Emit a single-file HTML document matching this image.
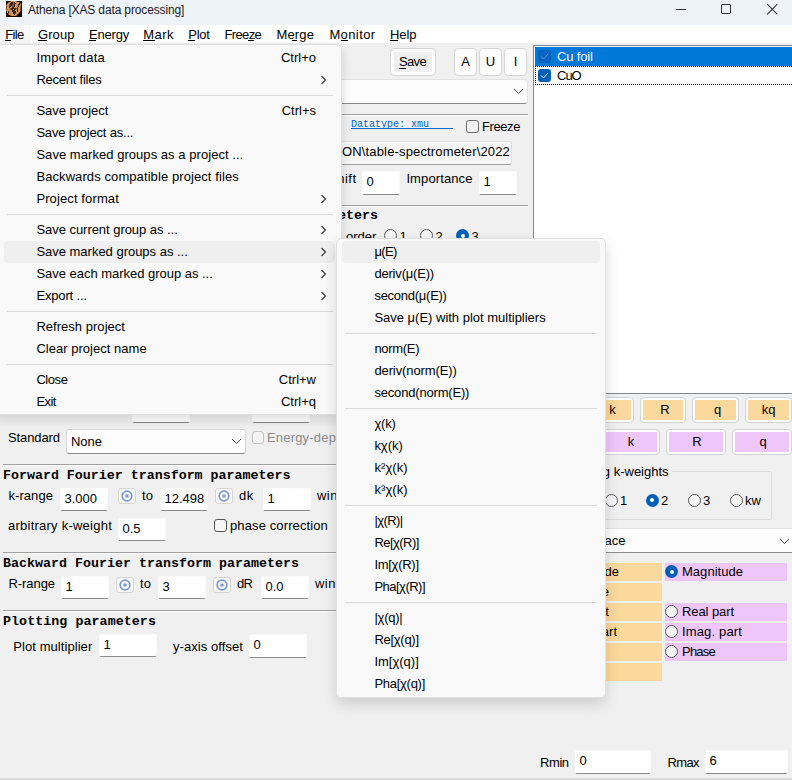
<!DOCTYPE html>
<html><head><meta charset="utf-8"><style>
html,body{margin:0;padding:0;}
body{width:792px;height:780px;overflow:hidden;position:relative;background:#f0f0f0;font-family:"Liberation Sans",sans-serif;}
body div{position:absolute;box-sizing:border-box;}
u{text-decoration:none;border-bottom:1px solid currentColor;}
</style></head><body>
<div style="left:0px;top:0px;width:792px;height:25px;background:#eef2f9;"></div>
<svg style="position:absolute;left:6px;top:1px" width="16" height="16" viewBox="0 0 16 16" shape-rendering="crispEdges"><rect x="0" y="0" width="1" height="1" fill="#0d0805"/><rect x="1" y="0" width="1" height="1" fill="#0d0805"/><rect x="2" y="0" width="1" height="1" fill="#0d0805"/><rect x="3" y="0" width="1" height="1" fill="#0d0805"/><rect x="4" y="0" width="1" height="1" fill="#7a5030"/><rect x="5" y="0" width="1" height="1" fill="#cf935c"/><rect x="6" y="0" width="1" height="1" fill="#cf935c"/><rect x="7" y="0" width="1" height="1" fill="#cf935c"/><rect x="8" y="0" width="1" height="1" fill="#cf935c"/><rect x="9" y="0" width="1" height="1" fill="#cf935c"/><rect x="10" y="0" width="1" height="1" fill="#7a5030"/><rect x="11" y="0" width="1" height="1" fill="#0d0805"/><rect x="12" y="0" width="1" height="1" fill="#0d0805"/><rect x="13" y="0" width="1" height="1" fill="#0d0805"/><rect x="14" y="0" width="1" height="1" fill="#0d0805"/><rect x="15" y="0" width="1" height="1" fill="#0d0805"/><rect x="0" y="1" width="1" height="1" fill="#0d0805"/><rect x="1" y="1" width="1" height="1" fill="#0d0805"/><rect x="2" y="1" width="1" height="1" fill="#7a5030"/><rect x="3" y="1" width="1" height="1" fill="#cf935c"/><rect x="4" y="1" width="1" height="1" fill="#cf935c"/><rect x="5" y="1" width="1" height="1" fill="#3a2416"/><rect x="6" y="1" width="1" height="1" fill="#3a2416"/><rect x="7" y="1" width="1" height="1" fill="#5c5862"/><rect x="8" y="1" width="1" height="1" fill="#3a2416"/><rect x="9" y="1" width="1" height="1" fill="#cf935c"/><rect x="10" y="1" width="1" height="1" fill="#cf935c"/><rect x="11" y="1" width="1" height="1" fill="#cf935c"/><rect x="12" y="1" width="1" height="1" fill="#cf935c"/><rect x="13" y="1" width="1" height="1" fill="#7a5030"/><rect x="14" y="1" width="1" height="1" fill="#0d0805"/><rect x="15" y="1" width="1" height="1" fill="#0d0805"/><rect x="0" y="2" width="1" height="1" fill="#0d0805"/><rect x="1" y="2" width="1" height="1" fill="#7a5030"/><rect x="2" y="2" width="1" height="1" fill="#cf935c"/><rect x="3" y="2" width="1" height="1" fill="#cf935c"/><rect x="4" y="2" width="1" height="1" fill="#3a2416"/><rect x="5" y="2" width="1" height="1" fill="#3a2416"/><rect x="6" y="2" width="1" height="1" fill="#3a2416"/><rect x="7" y="2" width="1" height="1" fill="#5c5862"/><rect x="8" y="2" width="1" height="1" fill="#3a2416"/><rect x="9" y="2" width="1" height="1" fill="#3a2416"/><rect x="10" y="2" width="1" height="1" fill="#cf935c"/><rect x="11" y="2" width="1" height="1" fill="#cf935c"/><rect x="12" y="2" width="1" height="1" fill="#cf935c"/><rect x="13" y="2" width="1" height="1" fill="#3a2416"/><rect x="14" y="2" width="1" height="1" fill="#7a5030"/><rect x="15" y="2" width="1" height="1" fill="#0d0805"/><rect x="0" y="3" width="1" height="1" fill="#0d0805"/><rect x="1" y="3" width="1" height="1" fill="#cf935c"/><rect x="2" y="3" width="1" height="1" fill="#cf935c"/><rect x="3" y="3" width="1" height="1" fill="#7a5030"/><rect x="4" y="3" width="1" height="1" fill="#3a2416"/><rect x="5" y="3" width="1" height="1" fill="#3a2416"/><rect x="6" y="3" width="1" height="1" fill="#7a5030"/><rect x="7" y="3" width="1" height="1" fill="#5c5862"/><rect x="8" y="3" width="1" height="1" fill="#3a2416"/><rect x="9" y="3" width="1" height="1" fill="#cf935c"/><rect x="10" y="3" width="1" height="1" fill="#cf935c"/><rect x="11" y="3" width="1" height="1" fill="#cf935c"/><rect x="12" y="3" width="1" height="1" fill="#3a2416"/><rect x="13" y="3" width="1" height="1" fill="#3a2416"/><rect x="14" y="3" width="1" height="1" fill="#cf935c"/><rect x="15" y="3" width="1" height="1" fill="#0d0805"/><rect x="0" y="4" width="1" height="1" fill="#7a5030"/><rect x="1" y="4" width="1" height="1" fill="#cf935c"/><rect x="2" y="4" width="1" height="1" fill="#cf935c"/><rect x="3" y="4" width="1" height="1" fill="#7a5030"/><rect x="4" y="4" width="1" height="1" fill="#3a2416"/><rect x="5" y="4" width="1" height="1" fill="#3a2416"/><rect x="6" y="4" width="1" height="1" fill="#7a5030"/><rect x="7" y="4" width="1" height="1" fill="#7a5030"/><rect x="8" y="4" width="1" height="1" fill="#3a2416"/><rect x="9" y="4" width="1" height="1" fill="#cf935c"/><rect x="10" y="4" width="1" height="1" fill="#cf935c"/><rect x="11" y="4" width="1" height="1" fill="#cf935c"/><rect x="12" y="4" width="1" height="1" fill="#3a2416"/><rect x="13" y="4" width="1" height="1" fill="#cf935c"/><rect x="14" y="4" width="1" height="1" fill="#cf935c"/><rect x="15" y="4" width="1" height="1" fill="#0d0805"/><rect x="0" y="5" width="1" height="1" fill="#7a5030"/><rect x="1" y="5" width="1" height="1" fill="#cf935c"/><rect x="2" y="5" width="1" height="1" fill="#cf935c"/><rect x="3" y="5" width="1" height="1" fill="#3a2416"/><rect x="4" y="5" width="1" height="1" fill="#3a2416"/><rect x="5" y="5" width="1" height="1" fill="#cf935c"/><rect x="6" y="5" width="1" height="1" fill="#7a5030"/><rect x="7" y="5" width="1" height="1" fill="#7a5030"/><rect x="8" y="5" width="1" height="1" fill="#3a2416"/><rect x="9" y="5" width="1" height="1" fill="#cf935c"/><rect x="10" y="5" width="1" height="1" fill="#cf935c"/><rect x="11" y="5" width="1" height="1" fill="#cf935c"/><rect x="12" y="5" width="1" height="1" fill="#3a2416"/><rect x="13" y="5" width="1" height="1" fill="#cf935c"/><rect x="14" y="5" width="1" height="1" fill="#7a5030"/><rect x="15" y="5" width="1" height="1" fill="#0d0805"/><rect x="0" y="6" width="1" height="1" fill="#7a5030"/><rect x="1" y="6" width="1" height="1" fill="#cf935c"/><rect x="2" y="6" width="1" height="1" fill="#cf935c"/><rect x="3" y="6" width="1" height="1" fill="#3a2416"/><rect x="4" y="6" width="1" height="1" fill="#cf935c"/><rect x="5" y="6" width="1" height="1" fill="#cf935c"/><rect x="6" y="6" width="1" height="1" fill="#3a2416"/><rect x="7" y="6" width="1" height="1" fill="#3a2416"/><rect x="8" y="6" width="1" height="1" fill="#cf935c"/><rect x="9" y="6" width="1" height="1" fill="#cf935c"/><rect x="10" y="6" width="1" height="1" fill="#cf935c"/><rect x="11" y="6" width="1" height="1" fill="#3a2416"/><rect x="12" y="6" width="1" height="1" fill="#cf935c"/><rect x="13" y="6" width="1" height="1" fill="#cf935c"/><rect x="14" y="6" width="1" height="1" fill="#7a5030"/><rect x="15" y="6" width="1" height="1" fill="#0d0805"/><rect x="0" y="7" width="1" height="1" fill="#7a5030"/><rect x="1" y="7" width="1" height="1" fill="#cf935c"/><rect x="2" y="7" width="1" height="1" fill="#cf935c"/><rect x="3" y="7" width="1" height="1" fill="#cf935c"/><rect x="4" y="7" width="1" height="1" fill="#7a5030"/><rect x="5" y="7" width="1" height="1" fill="#3a2416"/><rect x="6" y="7" width="1" height="1" fill="#3a2416"/><rect x="7" y="7" width="1" height="1" fill="#3a2416"/><rect x="8" y="7" width="1" height="1" fill="#3a2416"/><rect x="9" y="7" width="1" height="1" fill="#3a2416"/><rect x="10" y="7" width="1" height="1" fill="#7a5030"/><rect x="11" y="7" width="1" height="1" fill="#3a2416"/><rect x="12" y="7" width="1" height="1" fill="#cf935c"/><rect x="13" y="7" width="1" height="1" fill="#cf935c"/><rect x="14" y="7" width="1" height="1" fill="#7a5030"/><rect x="15" y="7" width="1" height="1" fill="#0d0805"/><rect x="0" y="8" width="1" height="1" fill="#7a5030"/><rect x="1" y="8" width="1" height="1" fill="#cf935c"/><rect x="2" y="8" width="1" height="1" fill="#cf935c"/><rect x="3" y="8" width="1" height="1" fill="#cf935c"/><rect x="4" y="8" width="1" height="1" fill="#7a5030"/><rect x="5" y="8" width="1" height="1" fill="#3a2416"/><rect x="6" y="8" width="1" height="1" fill="#3a2416"/><rect x="7" y="8" width="1" height="1" fill="#cf935c"/><rect x="8" y="8" width="1" height="1" fill="#3a2416"/><rect x="9" y="8" width="1" height="1" fill="#7a5030"/><rect x="10" y="8" width="1" height="1" fill="#cf935c"/><rect x="11" y="8" width="1" height="1" fill="#3a2416"/><rect x="12" y="8" width="1" height="1" fill="#cf935c"/><rect x="13" y="8" width="1" height="1" fill="#cf935c"/><rect x="14" y="8" width="1" height="1" fill="#7a5030"/><rect x="15" y="8" width="1" height="1" fill="#0d0805"/><rect x="0" y="9" width="1" height="1" fill="#7a5030"/><rect x="1" y="9" width="1" height="1" fill="#cf935c"/><rect x="2" y="9" width="1" height="1" fill="#cf935c"/><rect x="3" y="9" width="1" height="1" fill="#cf935c"/><rect x="4" y="9" width="1" height="1" fill="#cf935c"/><rect x="5" y="9" width="1" height="1" fill="#cf935c"/><rect x="6" y="9" width="1" height="1" fill="#3a2416"/><rect x="7" y="9" width="1" height="1" fill="#3a2416"/><rect x="8" y="9" width="1" height="1" fill="#3a2416"/><rect x="9" y="9" width="1" height="1" fill="#cf935c"/><rect x="10" y="9" width="1" height="1" fill="#cf935c"/><rect x="11" y="9" width="1" height="1" fill="#3a2416"/><rect x="12" y="9" width="1" height="1" fill="#cf935c"/><rect x="13" y="9" width="1" height="1" fill="#cf935c"/><rect x="14" y="9" width="1" height="1" fill="#7a5030"/><rect x="15" y="9" width="1" height="1" fill="#0d0805"/><rect x="0" y="10" width="1" height="1" fill="#0d0805"/><rect x="1" y="10" width="1" height="1" fill="#cf935c"/><rect x="2" y="10" width="1" height="1" fill="#3a2416"/><rect x="3" y="10" width="1" height="1" fill="#cf935c"/><rect x="4" y="10" width="1" height="1" fill="#cf935c"/><rect x="5" y="10" width="1" height="1" fill="#cf935c"/><rect x="6" y="10" width="1" height="1" fill="#3a2416"/><rect x="7" y="10" width="1" height="1" fill="#3a2416"/><rect x="8" y="10" width="1" height="1" fill="#3a2416"/><rect x="9" y="10" width="1" height="1" fill="#3a2416"/><rect x="10" y="10" width="1" height="1" fill="#cf935c"/><rect x="11" y="10" width="1" height="1" fill="#3a2416"/><rect x="12" y="10" width="1" height="1" fill="#cf935c"/><rect x="13" y="10" width="1" height="1" fill="#cf935c"/><rect x="14" y="10" width="1" height="1" fill="#0d0805"/><rect x="15" y="10" width="1" height="1" fill="#0d0805"/><rect x="0" y="11" width="1" height="1" fill="#0d0805"/><rect x="1" y="11" width="1" height="1" fill="#cf935c"/><rect x="2" y="11" width="1" height="1" fill="#3a2416"/><rect x="3" y="11" width="1" height="1" fill="#cf935c"/><rect x="4" y="11" width="1" height="1" fill="#cf935c"/><rect x="5" y="11" width="1" height="1" fill="#cf935c"/><rect x="6" y="11" width="1" height="1" fill="#cf935c"/><rect x="7" y="11" width="1" height="1" fill="#3a2416"/><rect x="8" y="11" width="1" height="1" fill="#3a2416"/><rect x="9" y="11" width="1" height="1" fill="#3a2416"/><rect x="10" y="11" width="1" height="1" fill="#cf935c"/><rect x="11" y="11" width="1" height="1" fill="#cf935c"/><rect x="12" y="11" width="1" height="1" fill="#cf935c"/><rect x="13" y="11" width="1" height="1" fill="#7a5030"/><rect x="14" y="11" width="1" height="1" fill="#0d0805"/><rect x="15" y="11" width="1" height="1" fill="#0d0805"/><rect x="0" y="12" width="1" height="1" fill="#0d0805"/><rect x="1" y="12" width="1" height="1" fill="#0d0805"/><rect x="2" y="12" width="1" height="1" fill="#7a5030"/><rect x="3" y="12" width="1" height="1" fill="#cf935c"/><rect x="4" y="12" width="1" height="1" fill="#cf935c"/><rect x="5" y="12" width="1" height="1" fill="#cf935c"/><rect x="6" y="12" width="1" height="1" fill="#cf935c"/><rect x="7" y="12" width="1" height="1" fill="#3a2416"/><rect x="8" y="12" width="1" height="1" fill="#3a2416"/><rect x="9" y="12" width="1" height="1" fill="#7a5030"/><rect x="10" y="12" width="1" height="1" fill="#cf935c"/><rect x="11" y="12" width="1" height="1" fill="#cf935c"/><rect x="12" y="12" width="1" height="1" fill="#7a5030"/><rect x="13" y="12" width="1" height="1" fill="#0d0805"/><rect x="14" y="12" width="1" height="1" fill="#0d0805"/><rect x="15" y="12" width="1" height="1" fill="#0d0805"/><rect x="0" y="13" width="1" height="1" fill="#0d0805"/><rect x="1" y="13" width="1" height="1" fill="#0d0805"/><rect x="2" y="13" width="1" height="1" fill="#7a5030"/><rect x="3" y="13" width="1" height="1" fill="#cf935c"/><rect x="4" y="13" width="1" height="1" fill="#cf935c"/><rect x="5" y="13" width="1" height="1" fill="#cf935c"/><rect x="6" y="13" width="1" height="1" fill="#cf935c"/><rect x="7" y="13" width="1" height="1" fill="#cf935c"/><rect x="8" y="13" width="1" height="1" fill="#3a2416"/><rect x="9" y="13" width="1" height="1" fill="#cf935c"/><rect x="10" y="13" width="1" height="1" fill="#cf935c"/><rect x="11" y="13" width="1" height="1" fill="#7a5030"/><rect x="12" y="13" width="1" height="1" fill="#0d0805"/><rect x="13" y="13" width="1" height="1" fill="#0d0805"/><rect x="14" y="13" width="1" height="1" fill="#0d0805"/><rect x="15" y="13" width="1" height="1" fill="#0d0805"/><rect x="0" y="14" width="1" height="1" fill="#0d0805"/><rect x="1" y="14" width="1" height="1" fill="#0d0805"/><rect x="2" y="14" width="1" height="1" fill="#0d0805"/><rect x="3" y="14" width="1" height="1" fill="#0d0805"/><rect x="4" y="14" width="1" height="1" fill="#7a5030"/><rect x="5" y="14" width="1" height="1" fill="#cf935c"/><rect x="6" y="14" width="1" height="1" fill="#cf935c"/><rect x="7" y="14" width="1" height="1" fill="#cf935c"/><rect x="8" y="14" width="1" height="1" fill="#cf935c"/><rect x="9" y="14" width="1" height="1" fill="#cf935c"/><rect x="10" y="14" width="1" height="1" fill="#7a5030"/><rect x="11" y="14" width="1" height="1" fill="#0d0805"/><rect x="12" y="14" width="1" height="1" fill="#0d0805"/><rect x="13" y="14" width="1" height="1" fill="#0d0805"/><rect x="14" y="14" width="1" height="1" fill="#0d0805"/><rect x="15" y="14" width="1" height="1" fill="#0d0805"/><rect x="0" y="15" width="1" height="1" fill="#0d0805"/><rect x="1" y="15" width="1" height="1" fill="#0d0805"/><rect x="2" y="15" width="1" height="1" fill="#0d0805"/><rect x="3" y="15" width="1" height="1" fill="#0d0805"/><rect x="4" y="15" width="1" height="1" fill="#0d0805"/><rect x="5" y="15" width="1" height="1" fill="#0d0805"/><rect x="6" y="15" width="1" height="1" fill="#0d0805"/><rect x="7" y="15" width="1" height="1" fill="#0d0805"/><rect x="8" y="15" width="1" height="1" fill="#0d0805"/><rect x="9" y="15" width="1" height="1" fill="#0d0805"/><rect x="10" y="15" width="1" height="1" fill="#0d0805"/><rect x="11" y="15" width="1" height="1" fill="#0d0805"/><rect x="12" y="15" width="1" height="1" fill="#0d0805"/><rect x="13" y="15" width="1" height="1" fill="#0d0805"/><rect x="14" y="15" width="1" height="1" fill="#0d0805"/><rect x="15" y="15" width="1" height="1" fill="#0d0805"/></svg>
<div style="left:28.00px;top:3.44px;font-size:12px;line-height:14px;color:#1b1b1b;font-family:'Liberation Sans', sans-serif;font-weight:normal;white-space:pre;letter-spacing:-0.14px;">Athena [XAS data processing]</div>
<div style="left:676px;top:9px;width:10px;height:1px;background:#333;"></div>
<div style="left:721px;top:4px;width:10px;height:10px;border:1px solid #333;border-radius:1px;"></div>
<svg style="position:absolute;left:766px;top:3px" width="13" height="13" viewBox="0 0 13 13"><path d="M1.2 1.2 L11.3 11.3 M11.3 1.2 L1.2 11.3" stroke="#333" stroke-width="1.05"/></svg>
<div style="left:0px;top:25px;width:792px;height:18px;background:#ffffff;"></div>
<div style="left:0px;top:25px;width:31px;height:18px;background:#f8f8f8;"></div>
<div style="left:5.30px;top:26.50px;font-size:13px;line-height:16px;color:#000;font-family:'Liberation Sans', sans-serif;font-weight:normal;white-space:pre;letter-spacing:-0.638px;">File</div>
<div style="left:5px;top:40px;width:6px;height:1px;background:#000;"></div>
<div style="left:38.00px;top:26.50px;font-size:13px;line-height:16px;color:#000;font-family:'Liberation Sans', sans-serif;font-weight:normal;white-space:pre;letter-spacing:0.092px;">Group</div>
<div style="left:38px;top:40px;width:9px;height:1px;background:#000;"></div>
<div style="left:89.00px;top:26.50px;font-size:13px;line-height:16px;color:#000;font-family:'Liberation Sans', sans-serif;font-weight:normal;white-space:pre;letter-spacing:-0.201px;">Energy</div>
<div style="left:89px;top:40px;width:7px;height:1px;background:#000;"></div>
<div style="left:143.30px;top:26.50px;font-size:13px;line-height:16px;color:#000;font-family:'Liberation Sans', sans-serif;font-weight:normal;white-space:pre;letter-spacing:0.427px;">Mark</div>
<div style="left:143px;top:40px;width:12px;height:1px;background:#000;"></div>
<div style="left:188.20px;top:26.50px;font-size:13px;line-height:16px;color:#000;font-family:'Liberation Sans', sans-serif;font-weight:normal;white-space:pre;letter-spacing:-0.227px;">Plot</div>
<div style="left:188px;top:40px;width:7px;height:1px;background:#000;"></div>
<div style="left:224.50px;top:26.50px;font-size:13px;line-height:16px;color:#000;font-family:'Liberation Sans', sans-serif;font-weight:normal;white-space:pre;letter-spacing:-0.628px;">Freeze</div>
<div style="left:248px;top:40px;width:6px;height:1px;background:#000;"></div>
<div style="left:276.40px;top:26.50px;font-size:13px;line-height:16px;color:#000;font-family:'Liberation Sans', sans-serif;font-weight:normal;white-space:pre;letter-spacing:0.188px;">Merge</div>
<div style="left:292px;top:40px;width:5px;height:1px;background:#000;"></div>
<div style="left:329.40px;top:26.50px;font-size:13px;line-height:16px;color:#000;font-family:'Liberation Sans', sans-serif;font-weight:normal;white-space:pre;letter-spacing:0.392px;">Monitor</div>
<div style="left:341px;top:40px;width:7px;height:1px;background:#000;"></div>
<div style="left:390.00px;top:26.50px;font-size:13px;line-height:16px;color:#000;font-family:'Liberation Sans', sans-serif;font-weight:normal;white-space:pre;letter-spacing:-0.088px;">Help</div>
<div style="left:390px;top:40px;width:8px;height:1px;background:#000;"></div>
<div style="left:390px;top:48px;width:46px;height:28px;border:1px solid #d6d6d6;border-radius:4px;background:#fdfdfd;"></div>
<div style="left:394px;top:52px;width:38px;height:20px;background:#efefef;"></div>
<div style="left:399.00px;top:53.80px;font-size:13px;line-height:16px;color:#000;font-family:'Liberation Sans', sans-serif;font-weight:normal;white-space:pre;letter-spacing:-0.660px;">Save</div>
<div style="left:399px;top:68px;width:7px;height:1px;background:#000;"></div>
<div style="left:454px;top:48px;width:23px;height:28px;border:1px solid #d6d6d6;border-radius:4px;background:#fdfdfd;"></div>
<div style="left:461.16px;top:53.80px;font-size:13px;line-height:16px;color:#000;font-family:'Liberation Sans', sans-serif;font-weight:normal;white-space:pre;">A</div>
<div style="left:479px;top:48px;width:23px;height:28px;border:1px solid #d6d6d6;border-radius:4px;background:#fdfdfd;"></div>
<div style="left:485.80px;top:53.80px;font-size:13px;line-height:16px;color:#000;font-family:'Liberation Sans', sans-serif;font-weight:normal;white-space:pre;">U</div>
<div style="left:504px;top:48px;width:23px;height:28px;border:1px solid #d6d6d6;border-radius:4px;background:#fdfdfd;"></div>
<div style="left:513.70px;top:53.80px;font-size:13px;line-height:16px;color:#000;font-family:'Liberation Sans', sans-serif;font-weight:normal;white-space:pre;">I</div>
<div style="left:300px;top:79px;width:228px;height:25px;border:1px solid #e2e2e2;border-bottom:1px solid #8a8a8a;border-radius:4px;background:#fdfdfd;"></div>
<svg style="position:absolute;left:513px;top:88px" width="11" height="7" viewBox="0 0 11 7"><path d="M1 1 L5.5 5.5 L10 1" stroke="#444" fill="none" stroke-width="1"/></svg>
<div style="left:300px;top:114px;width:228px;height:1px;background:#a0a0a0;"></div>
<div style="left:300px;top:115px;width:228px;height:1px;background:#ffffff;"></div>
<div style="left:351.00px;top:119.34px;font-size:10px;line-height:12px;color:#0066cc;font-family:'Liberation Mono', monospace;font-weight:normal;white-space:pre;">Datatype: xmu</div>
<div style="left:351px;top:128px;width:102px;height:1px;background:#0066cc;"></div>
<div style="left:466px;top:120px;width:13px;height:13px;border:1px solid #6b6b6b;border-radius:3px;background:#f4f4f4;"></div>
<div style="left:482.00px;top:118.50px;font-size:13px;line-height:16px;color:#000;font-family:'Liberation Sans', sans-serif;font-weight:normal;white-space:pre;letter-spacing:-0.411px;">Freeze</div>
<div style="left:300px;top:141px;width:212px;height:24px;border:1px solid #e0e0e0;border-bottom:1px solid #a0a0a0;border-radius:3px;background:#f6f6f6;"></div>
<div style="left:342.00px;top:144.20px;font-size:13px;line-height:16px;color:#000;font-family:'Liberation Sans', sans-serif;font-weight:normal;white-space:pre;letter-spacing:0.151px;">ON\table-spectrometer\2022</div>
<div style="left:330.16px;top:170.50px;font-size:13px;line-height:16px;color:#000;font-family:'Liberation Sans', sans-serif;font-weight:normal;white-space:pre;letter-spacing:0.5px;">shift</div>
<div style="left:362px;top:171px;width:38px;height:24px;border:1px solid #fbfbfb;border-bottom:1px solid #8a8a8a;border-radius:2px;background:#fff;"></div>
<div style="left:366.50px;top:173.50px;font-size:13px;line-height:16px;color:#000;font-family:'Liberation Sans', sans-serif;font-weight:normal;white-space:pre;">0</div>
<div style="left:406.40px;top:170.50px;font-size:13px;line-height:16px;color:#000;font-family:'Liberation Sans', sans-serif;font-weight:normal;white-space:pre;letter-spacing:0.115px;">Importance</div>
<div style="left:479px;top:171px;width:38px;height:24px;border:1px solid #fbfbfb;border-bottom:1px solid #8a8a8a;border-radius:2px;background:#fff;"></div>
<div style="left:483.50px;top:173.50px;font-size:13px;line-height:16px;color:#000;font-family:'Liberation Sans', sans-serif;font-weight:normal;white-space:pre;">1</div>
<div style="left:300px;top:205px;width:228px;height:1px;background:#a0a0a0;"></div>
<div style="left:300px;top:206px;width:228px;height:1px;background:#ffffff;"></div>
<div style="left:338.00px;top:208.45px;font-size:13.33px;line-height:16px;color:#000;font-family:'Liberation Mono', monospace;font-weight:bold;white-space:pre;">eters</div>
<div style="left:346.00px;top:228.50px;font-size:13px;line-height:16px;color:#000;font-family:'Liberation Sans', sans-serif;font-weight:normal;white-space:pre;">order</div>
<div style="left:384.0px;top:229px;width:13px;height:13px;border-radius:50%;border:1px solid #555;background:#f6f6f6;"></div>
<div style="left:399.50px;top:228.50px;font-size:13px;line-height:16px;color:#000;font-family:'Liberation Sans', sans-serif;font-weight:normal;white-space:pre;">1</div>
<div style="left:420.0px;top:229px;width:13px;height:13px;border-radius:50%;border:1px solid #555;background:#f6f6f6;"></div>
<div style="left:435.50px;top:228.50px;font-size:13px;line-height:16px;color:#000;font-family:'Liberation Sans', sans-serif;font-weight:normal;white-space:pre;">2</div>
<div style="left:456.0px;top:229px;width:13px;height:13px;border-radius:50%;background:#005fb8;"></div>
<div style="left:460.5px;top:233.5px;width:4px;height:4px;border-radius:50%;background:#fff;"></div>
<div style="left:471.50px;top:228.50px;font-size:13px;line-height:16px;color:#000;font-family:'Liberation Sans', sans-serif;font-weight:normal;white-space:pre;">3</div>
<div style="left:533px;top:45px;width:259px;height:349px;border:1px solid #828790;border-right:none;background:#fff;"></div>
<div style="left:535px;top:47px;width:257px;height:19px;background:#0078d7;"></div>
<div style="left:538px;top:50px;width:13px;height:13px;border-radius:2px;background:#0864c4;"></div>
<svg style="position:absolute;left:538px;top:50px" width="13" height="13" viewBox="0 0 13 13"><path d="M3 6.5 L5.5 9 L10 4" stroke="#5a98de" fill="none" stroke-width="1"/></svg>
<div style="left:557.00px;top:49.00px;font-size:13px;line-height:16px;color:#fff;font-family:'Liberation Sans', sans-serif;font-weight:normal;white-space:pre;letter-spacing:-0.151px;">Cu foil</div>
<div style="left:535px;top:66px;width:257px;height:19px;border:1px dotted #000;border-right:none;"></div>
<div style="left:538px;top:69px;width:13px;height:13px;border-radius:3px;background:#005fb8;"></div>
<svg style="position:absolute;left:538px;top:69px" width="13" height="13" viewBox="0 0 13 13"><path d="M3 6.5 L5.5 9 L10 4" stroke="#dce9f7" fill="none" stroke-width="1"/></svg>
<div style="left:557.00px;top:68.00px;font-size:13px;line-height:16px;color:#000;font-family:'Liberation Sans', sans-serif;font-weight:normal;white-space:pre;letter-spacing:-1.000px;">CuO</div>
<div style="left:587px;top:397px;width:47px;height:26px;border:1px solid #d4d4d4;border-radius:4px;background:#fdfdfd;"></div>
<div style="left:590px;top:400px;width:41px;height:20px;background:#fbd99d;"></div>
<div style="left:609.25px;top:402.20px;font-size:13px;line-height:16px;color:#000;font-family:'Liberation Sans', sans-serif;font-weight:normal;white-space:pre;">k</div>
<div style="left:640px;top:397px;width:46px;height:26px;border:1px solid #d4d4d4;border-radius:4px;background:#fdfdfd;"></div>
<div style="left:643px;top:400px;width:40px;height:20px;background:#fbd99d;"></div>
<div style="left:660.30px;top:402.20px;font-size:13px;line-height:16px;color:#000;font-family:'Liberation Sans', sans-serif;font-weight:normal;white-space:pre;">R</div>
<div style="left:692px;top:397px;width:47px;height:26px;border:1px solid #d4d4d4;border-radius:4px;background:#fdfdfd;"></div>
<div style="left:695px;top:400px;width:41px;height:20px;background:#fbd99d;"></div>
<div style="left:713.88px;top:402.20px;font-size:13px;line-height:16px;color:#000;font-family:'Liberation Sans', sans-serif;font-weight:normal;white-space:pre;">q</div>
<div style="left:745px;top:397px;width:47px;height:26px;border:1px solid #d4d4d4;border-radius:4px;background:#fdfdfd;"></div>
<div style="left:748px;top:400px;width:41px;height:20px;background:#fbd99d;"></div>
<div style="left:761.63px;top:402.20px;font-size:13px;line-height:16px;color:#000;font-family:'Liberation Sans', sans-serif;font-weight:normal;white-space:pre;">kq</div>
<div style="left:600px;top:429px;width:60px;height:26px;border:1px solid #d4d4d4;border-radius:4px;background:#fdfdfd;"></div>
<div style="left:603px;top:432px;width:54px;height:20px;background:#efc6fa;"></div>
<div style="left:627.75px;top:434.20px;font-size:13px;line-height:16px;color:#000;font-family:'Liberation Sans', sans-serif;font-weight:normal;white-space:pre;">k</div>
<div style="left:666px;top:429px;width:60px;height:26px;border:1px solid #d4d4d4;border-radius:4px;background:#fdfdfd;"></div>
<div style="left:669px;top:432px;width:54px;height:20px;background:#efc6fa;"></div>
<div style="left:692.30px;top:434.20px;font-size:13px;line-height:16px;color:#000;font-family:'Liberation Sans', sans-serif;font-weight:normal;white-space:pre;">R</div>
<div style="left:732px;top:429px;width:60px;height:26px;border:1px solid #d4d4d4;border-radius:4px;background:#fdfdfd;"></div>
<div style="left:735px;top:432px;width:54px;height:20px;background:#efc6fa;"></div>
<div style="left:759.38px;top:434.20px;font-size:13px;line-height:16px;color:#000;font-family:'Liberation Sans', sans-serif;font-weight:normal;white-space:pre;">q</div>
<div style="left:540px;top:471px;width:232px;height:49px;border:1px solid #dcdcdc;border-radius:2px;"></div>
<div style="left:560px;top:466px;width:112px;height:8px;background:#f0f0f0;"></div>
<div style="left:566.69px;top:464.10px;font-size:13px;line-height:16px;color:#000;font-family:'Liberation Sans', sans-serif;font-weight:normal;white-space:pre;">Plotting k-weights</div>
<div style="left:604.5px;top:493.5px;width:13px;height:13px;border-radius:50%;border:1px solid #555;background:#f6f6f6;"></div>
<div style="left:620.00px;top:492.50px;font-size:13px;line-height:16px;color:#000;font-family:'Liberation Sans', sans-serif;font-weight:normal;white-space:pre;">1</div>
<div style="left:645.5px;top:493.5px;width:13px;height:13px;border-radius:50%;background:#005fb8;"></div>
<div style="left:650px;top:498px;width:4px;height:4px;border-radius:50%;background:#fff;"></div>
<div style="left:661.00px;top:492.50px;font-size:13px;line-height:16px;color:#000;font-family:'Liberation Sans', sans-serif;font-weight:normal;white-space:pre;">2</div>
<div style="left:687.5px;top:493.5px;width:13px;height:13px;border-radius:50%;border:1px solid #555;background:#f6f6f6;"></div>
<div style="left:703.00px;top:492.50px;font-size:13px;line-height:16px;color:#000;font-family:'Liberation Sans', sans-serif;font-weight:normal;white-space:pre;">3</div>
<div style="left:729.5px;top:493.5px;width:13px;height:13px;border-radius:50%;border:1px solid #555;background:#f6f6f6;"></div>
<div style="left:745.00px;top:492.50px;font-size:13px;line-height:16px;color:#000;font-family:'Liberation Sans', sans-serif;font-weight:normal;white-space:pre;">kw</div>
<div style="left:540px;top:528px;width:260px;height:25px;border:1px solid #e2e2e2;border-bottom:1px solid #8a8a8a;border-radius:4px;background:#fdfdfd;"></div>
<div style="left:577.80px;top:533.20px;font-size:13px;line-height:16px;color:#000;font-family:'Liberation Sans', sans-serif;font-weight:normal;white-space:pre;">R space</div>
<svg style="position:absolute;left:779px;top:538px" width="11" height="7" viewBox="0 0 11 7"><path d="M1 1 L5.5 5.5 L10 1" stroke="#444" fill="none" stroke-width="1"/></svg>
<div style="left:560px;top:563px;width:102px;height:18px;background:#fbd99d;"></div>
<div style="left:558.27px;top:564.00px;font-size:13px;line-height:16px;color:#000;font-family:'Liberation Sans', sans-serif;font-weight:normal;white-space:pre;">Magnitude</div>
<div style="left:560px;top:583px;width:102px;height:18px;background:#fbd99d;"></div>
<div style="left:554.77px;top:584.00px;font-size:13px;line-height:16px;color:#000;font-family:'Liberation Sans', sans-serif;font-weight:normal;white-space:pre;">Envelope</div>
<div style="left:560px;top:603px;width:102px;height:18px;background:#fbd99d;"></div>
<div style="left:556.03px;top:604.00px;font-size:13px;line-height:16px;color:#000;font-family:'Liberation Sans', sans-serif;font-weight:normal;white-space:pre;">Real part</div>
<div style="left:560px;top:623px;width:102px;height:18px;background:#fbd99d;"></div>
<div style="left:558.47px;top:624.00px;font-size:13px;line-height:16px;color:#000;font-family:'Liberation Sans', sans-serif;font-weight:normal;white-space:pre;">Imag. part</div>
<div style="left:560px;top:643px;width:102px;height:18px;background:#fbd99d;"></div>
<div style="left:560px;top:663px;width:102px;height:18px;background:#fbd99d;"></div>
<div style="left:665px;top:563px;width:122px;height:18px;background:#efc6fa;"></div>
<div style="left:665.0px;top:565.0px;width:13px;height:13px;border-radius:50%;background:#005fb8;"></div>
<div style="left:669.5px;top:569.5px;width:4px;height:4px;border-radius:50%;background:#fff;"></div>
<div style="left:682.00px;top:564.00px;font-size:13px;line-height:16px;color:#000;font-family:'Liberation Sans', sans-serif;font-weight:normal;white-space:pre;letter-spacing:0.030px;">Magnitude</div>
<div style="left:665px;top:603px;width:122px;height:18px;background:#efc6fa;"></div>
<div style="left:665.0px;top:605.0px;width:13px;height:13px;border-radius:50%;border:1px solid #555;background:#f6f6f6;"></div>
<div style="left:682.00px;top:604.00px;font-size:13px;line-height:16px;color:#000;font-family:'Liberation Sans', sans-serif;font-weight:normal;white-space:pre;letter-spacing:-0.085px;">Real part</div>
<div style="left:665px;top:623px;width:122px;height:18px;background:#efc6fa;"></div>
<div style="left:665.0px;top:625.0px;width:13px;height:13px;border-radius:50%;border:1px solid #555;background:#f6f6f6;"></div>
<div style="left:682.00px;top:624.00px;font-size:13px;line-height:16px;color:#000;font-family:'Liberation Sans', sans-serif;font-weight:normal;white-space:pre;letter-spacing:0.147px;">Imag. part</div>
<div style="left:665px;top:643px;width:122px;height:18px;background:#efc6fa;"></div>
<div style="left:665.0px;top:645.0px;width:13px;height:13px;border-radius:50%;border:1px solid #555;background:#f6f6f6;"></div>
<div style="left:682.00px;top:644.00px;font-size:13px;line-height:16px;color:#000;font-family:'Liberation Sans', sans-serif;font-weight:normal;white-space:pre;letter-spacing:-0.775px;">Phase</div>
<div style="left:540.00px;top:754.50px;font-size:13px;line-height:16px;color:#000;font-family:'Liberation Sans', sans-serif;font-weight:normal;white-space:pre;letter-spacing:-0.411px;">Rmin</div>
<div style="left:575px;top:750px;width:76px;height:24px;border:1px solid #fbfbfb;border-bottom:1px solid #8a8a8a;border-radius:2px;background:#fff;"></div>
<div style="left:579.50px;top:752.50px;font-size:13px;line-height:16px;color:#000;font-family:'Liberation Sans', sans-serif;font-weight:normal;white-space:pre;">0</div>
<div style="left:667.40px;top:754.50px;font-size:13px;line-height:16px;color:#000;font-family:'Liberation Sans', sans-serif;font-weight:normal;white-space:pre;letter-spacing:-0.613px;">Rmax</div>
<div style="left:705px;top:750px;width:83px;height:24px;border:1px solid #fbfbfb;border-bottom:1px solid #8a8a8a;border-radius:2px;background:#fff;"></div>
<div style="left:709.50px;top:752.50px;font-size:13px;line-height:16px;color:#000;font-family:'Liberation Sans', sans-serif;font-weight:normal;white-space:pre;">6</div>
<div style="left:0px;top:778px;width:792px;height:2px;background:#dcdcdc;"></div>
<div style="left:132px;top:400px;width:58px;height:23px;border:1px solid #fbfbfb;border-bottom:1px solid #8a8a8a;border-radius:2px;background:#fff;"></div>
<div style="left:252px;top:400px;width:58px;height:23px;border:1px solid #fbfbfb;border-bottom:1px solid #8a8a8a;border-radius:2px;background:#fff;"></div>
<div style="left:8.00px;top:429.50px;font-size:13px;line-height:16px;color:#000;font-family:'Liberation Sans', sans-serif;font-weight:normal;white-space:pre;letter-spacing:-0.098px;">Standard</div>
<div style="left:66px;top:429px;width:180px;height:25px;border:1px solid #d8d8d8;border-bottom:1px solid #8a8a8a;border-radius:3px;background:#fdfdfd;"></div>
<div style="left:71.00px;top:433.50px;font-size:13px;line-height:16px;color:#000;font-family:'Liberation Sans', sans-serif;font-weight:normal;white-space:pre;letter-spacing:-0.023px;">None</div>
<svg style="position:absolute;left:231px;top:438px" width="11" height="7" viewBox="0 0 11 7"><path d="M1 1 L5.5 5.5 L10 1" stroke="#444" fill="none" stroke-width="1"/></svg>
<div style="left:252px;top:431px;width:12px;height:13px;border:1px solid #c4c4c4;border-radius:3px;background:#f5f5f5;"></div>
<div style="left:267.00px;top:429.50px;font-size:13px;line-height:16px;color:#8a8a8a;font-family:'Liberation Sans', sans-serif;font-weight:normal;white-space:pre;letter-spacing:0.187px;">Energy-dependent</div>
<div style="left:3px;top:464px;width:334px;height:1px;background:#a0a0a0;"></div>
<div style="left:3px;top:465px;width:334px;height:1px;background:#ffffff;"></div>
<div style="left:3.00px;top:467.65px;font-size:13.33px;line-height:16px;color:#000;font-family:'Liberation Mono', monospace;font-weight:bold;white-space:pre;letter-spacing:-0.014px;">Forward Fourier transform parameters</div>
<div style="left:8.50px;top:487.50px;font-size:13px;line-height:16px;color:#000;font-family:'Liberation Sans', sans-serif;font-weight:normal;white-space:pre;letter-spacing:0.058px;">k-range</div>
<div style="left:60px;top:488px;width:48px;height:23px;border:1px solid #fbfbfb;border-bottom:1px solid #8a8a8a;border-radius:2px;background:#fff;"></div>
<div style="left:64.50px;top:490.50px;font-size:13px;line-height:16px;color:#000;font-family:'Liberation Sans', sans-serif;font-weight:normal;white-space:pre;">3.000</div>
<div style="left:118px;top:488px;width:18px;height:16px;border:1px solid #d4d4d4;border-radius:3px;background:#fafafa;"></div>
<svg style="position:absolute;left:118px;top:488px" width="18" height="16" viewBox="0 0 18 16"><circle cx="9" cy="8" r="4.8" fill="none" stroke="#7a9bd6" stroke-width="1.8"/><circle cx="9" cy="8" r="1.8" fill="#7a9bd6"/></svg>
<div style="left:142.00px;top:487.50px;font-size:13px;line-height:16px;color:#000;font-family:'Liberation Sans', sans-serif;font-weight:normal;white-space:pre;letter-spacing:0.078px;">to</div>
<div style="left:160px;top:488px;width:48px;height:23px;border:1px solid #fbfbfb;border-bottom:1px solid #8a8a8a;border-radius:2px;background:#fff;"></div>
<div style="left:164.50px;top:490.50px;font-size:13px;line-height:16px;color:#000;font-family:'Liberation Sans', sans-serif;font-weight:normal;white-space:pre;">12.498</div>
<div style="left:215px;top:488px;width:18px;height:16px;border:1px solid #d4d4d4;border-radius:3px;background:#fafafa;"></div>
<svg style="position:absolute;left:215px;top:488px" width="18" height="16" viewBox="0 0 18 16"><circle cx="9" cy="8" r="4.8" fill="none" stroke="#7a9bd6" stroke-width="1.8"/><circle cx="9" cy="8" r="1.8" fill="#7a9bd6"/></svg>
<div style="left:239.00px;top:487.50px;font-size:13px;line-height:16px;color:#000;font-family:'Liberation Sans', sans-serif;font-weight:normal;white-space:pre;letter-spacing:0.633px;">dk</div>
<div style="left:263px;top:488px;width:48px;height:23px;border:1px solid #fbfbfb;border-bottom:1px solid #8a8a8a;border-radius:2px;background:#fff;"></div>
<div style="left:267.50px;top:490.50px;font-size:13px;line-height:16px;color:#000;font-family:'Liberation Sans', sans-serif;font-weight:normal;white-space:pre;">1</div>
<div style="left:317.00px;top:487.50px;font-size:13px;line-height:16px;color:#000;font-family:'Liberation Sans', sans-serif;font-weight:normal;white-space:pre;letter-spacing:0.438px;">window</div>
<div style="left:8.00px;top:517.50px;font-size:13px;line-height:16px;color:#000;font-family:'Liberation Sans', sans-serif;font-weight:normal;white-space:pre;letter-spacing:0.238px;">arbitrary k-weight</div>
<div style="left:118px;top:518px;width:48px;height:23px;border:1px solid #fbfbfb;border-bottom:1px solid #8a8a8a;border-radius:2px;background:#fff;"></div>
<div style="left:122.50px;top:520.50px;font-size:13px;line-height:16px;color:#000;font-family:'Liberation Sans', sans-serif;font-weight:normal;white-space:pre;">0.5</div>
<div style="left:214px;top:519px;width:13px;height:13px;border:1px solid #555;border-radius:3px;background:#f6f6f6;"></div>
<div style="left:230.00px;top:517.50px;font-size:13px;line-height:16px;color:#000;font-family:'Liberation Sans', sans-serif;font-weight:normal;white-space:pre;letter-spacing:0.116px;">phase correction</div>
<div style="left:3px;top:552px;width:334px;height:1px;background:#a0a0a0;"></div>
<div style="left:3px;top:553px;width:334px;height:1px;background:#ffffff;"></div>
<div style="left:3.00px;top:555.95px;font-size:13.33px;line-height:16px;color:#000;font-family:'Liberation Mono', monospace;font-weight:bold;white-space:pre;letter-spacing:0.000px;">Backward Fourier transform parameters</div>
<div style="left:8.50px;top:575.50px;font-size:13px;line-height:16px;color:#000;font-family:'Liberation Sans', sans-serif;font-weight:normal;white-space:pre;letter-spacing:-0.069px;">R-range</div>
<div style="left:61px;top:576px;width:48px;height:23px;border:1px solid #fbfbfb;border-bottom:1px solid #8a8a8a;border-radius:2px;background:#fff;"></div>
<div style="left:65.50px;top:578.50px;font-size:13px;line-height:16px;color:#000;font-family:'Liberation Sans', sans-serif;font-weight:normal;white-space:pre;">1</div>
<div style="left:116px;top:577px;width:18px;height:16px;border:1px solid #d4d4d4;border-radius:3px;background:#fafafa;"></div>
<svg style="position:absolute;left:116px;top:577px" width="18" height="16" viewBox="0 0 18 16"><circle cx="9" cy="8" r="4.8" fill="none" stroke="#7a9bd6" stroke-width="1.8"/><circle cx="9" cy="8" r="1.8" fill="#7a9bd6"/></svg>
<div style="left:140.00px;top:575.50px;font-size:13px;line-height:16px;color:#000;font-family:'Liberation Sans', sans-serif;font-weight:normal;white-space:pre;letter-spacing:0.078px;">to</div>
<div style="left:158px;top:576px;width:48px;height:23px;border:1px solid #fbfbfb;border-bottom:1px solid #8a8a8a;border-radius:2px;background:#fff;"></div>
<div style="left:162.50px;top:578.50px;font-size:13px;line-height:16px;color:#000;font-family:'Liberation Sans', sans-serif;font-weight:normal;white-space:pre;">3</div>
<div style="left:213px;top:577px;width:18px;height:16px;border:1px solid #d4d4d4;border-radius:3px;background:#fafafa;"></div>
<svg style="position:absolute;left:213px;top:577px" width="18" height="16" viewBox="0 0 18 16"><circle cx="9" cy="8" r="4.8" fill="none" stroke="#7a9bd6" stroke-width="1.8"/><circle cx="9" cy="8" r="1.8" fill="#7a9bd6"/></svg>
<div style="left:237.00px;top:575.50px;font-size:13px;line-height:16px;color:#000;font-family:'Liberation Sans', sans-serif;font-weight:normal;white-space:pre;letter-spacing:-0.812px;">dR</div>
<div style="left:261px;top:576px;width:48px;height:23px;border:1px solid #fbfbfb;border-bottom:1px solid #8a8a8a;border-radius:2px;background:#fff;"></div>
<div style="left:265.50px;top:578.50px;font-size:13px;line-height:16px;color:#000;font-family:'Liberation Sans', sans-serif;font-weight:normal;white-space:pre;">0.0</div>
<div style="left:315.00px;top:575.50px;font-size:13px;line-height:16px;color:#000;font-family:'Liberation Sans', sans-serif;font-weight:normal;white-space:pre;letter-spacing:0.438px;">window</div>
<div style="left:3px;top:610px;width:334px;height:1px;background:#a0a0a0;"></div>
<div style="left:3px;top:611px;width:334px;height:1px;background:#ffffff;"></div>
<div style="left:3.00px;top:613.85px;font-size:13.33px;line-height:16px;color:#000;font-family:'Liberation Mono', monospace;font-weight:bold;white-space:pre;letter-spacing:0.053px;">Plotting parameters</div>
<div style="left:13.30px;top:638.50px;font-size:13px;line-height:16px;color:#000;font-family:'Liberation Sans', sans-serif;font-weight:normal;white-space:pre;letter-spacing:0.064px;">Plot multiplier</div>
<div style="left:99px;top:634px;width:58px;height:23px;border:1px solid #fbfbfb;border-bottom:1px solid #8a8a8a;border-radius:2px;background:#fff;"></div>
<div style="left:103.50px;top:636.50px;font-size:13px;line-height:16px;color:#000;font-family:'Liberation Sans', sans-serif;font-weight:normal;white-space:pre;">1</div>
<div style="left:173.00px;top:638.50px;font-size:13px;line-height:16px;color:#000;font-family:'Liberation Sans', sans-serif;font-weight:normal;white-space:pre;letter-spacing:0.067px;">y-axis offset</div>
<div style="left:249px;top:634px;width:58px;height:24px;border:1px solid #fbfbfb;border-bottom:1px solid #8a8a8a;border-radius:2px;background:#fff;"></div>
<div style="left:253.50px;top:636.50px;font-size:13px;line-height:16px;color:#000;font-family:'Liberation Sans', sans-serif;font-weight:normal;white-space:pre;">0</div>
<div style="left:-8px;top:44px;width:350px;height:371px;border:1px solid #e0e0e0;border-radius:5px;background:#f9f9f9;box-shadow:0 5px 12px rgba(0,0,0,0.13);"></div>
<div style="left:36.40px;top:49.50px;font-size:13px;line-height:16px;color:#000;font-family:'Liberation Sans', sans-serif;font-weight:normal;white-space:pre;letter-spacing:0.258px;">Import data</div>
<div style="right:476.00px;top:49.50px;font-size:13px;line-height:16px;color:#000;font-family:'Liberation Sans', sans-serif;font-weight:normal;white-space:pre;text-align:right;">Ctrl+o</div>
<div style="left:36.40px;top:71.50px;font-size:13px;line-height:16px;color:#000;font-family:'Liberation Sans', sans-serif;font-weight:normal;white-space:pre;letter-spacing:-0.236px;">Recent files</div>
<svg style="position:absolute;left:320px;top:75px" width="7" height="10" viewBox="0 0 7 10"><path d="M1.5 1 L5.5 5 L1.5 9" stroke="#333" fill="none" stroke-width="1.1"/></svg>
<div style="left:7px;top:95px;width:326px;height:1px;background:#dadada;"></div>
<div style="left:36.40px;top:102.50px;font-size:13px;line-height:16px;color:#000;font-family:'Liberation Sans', sans-serif;font-weight:normal;white-space:pre;letter-spacing:-0.032px;">Save project</div>
<div style="right:476.00px;top:102.50px;font-size:13px;line-height:16px;color:#000;font-family:'Liberation Sans', sans-serif;font-weight:normal;white-space:pre;text-align:right;">Ctrl+s</div>
<div style="left:36.40px;top:124.50px;font-size:13px;line-height:16px;color:#000;font-family:'Liberation Sans', sans-serif;font-weight:normal;white-space:pre;letter-spacing:-0.197px;">Save project as...</div>
<div style="left:36.40px;top:146.50px;font-size:13px;line-height:16px;color:#000;font-family:'Liberation Sans', sans-serif;font-weight:normal;white-space:pre;letter-spacing:0.047px;">Save marked groups as a project ...</div>
<div style="left:36.40px;top:168.50px;font-size:13px;line-height:16px;color:#000;font-family:'Liberation Sans', sans-serif;font-weight:normal;white-space:pre;letter-spacing:0.089px;">Backwards compatible project files</div>
<div style="left:36.40px;top:190.50px;font-size:13px;line-height:16px;color:#000;font-family:'Liberation Sans', sans-serif;font-weight:normal;white-space:pre;letter-spacing:0.113px;">Project format</div>
<svg style="position:absolute;left:320px;top:194px" width="7" height="10" viewBox="0 0 7 10"><path d="M1.5 1 L5.5 5 L1.5 9" stroke="#333" fill="none" stroke-width="1.1"/></svg>
<div style="left:7px;top:214px;width:326px;height:1px;background:#dadada;"></div>
<div style="left:36.40px;top:221.50px;font-size:13px;line-height:16px;color:#000;font-family:'Liberation Sans', sans-serif;font-weight:normal;white-space:pre;letter-spacing:-0.039px;">Save current group as ...</div>
<svg style="position:absolute;left:320px;top:225px" width="7" height="10" viewBox="0 0 7 10"><path d="M1.5 1 L5.5 5 L1.5 9" stroke="#333" fill="none" stroke-width="1.1"/></svg>
<div style="left:4px;top:241px;width:331px;height:22px;border-radius:4px;background:#efefef;"></div>
<div style="left:36.40px;top:243.50px;font-size:13px;line-height:16px;color:#000;font-family:'Liberation Sans', sans-serif;font-weight:normal;white-space:pre;letter-spacing:-0.015px;">Save marked groups as ...</div>
<svg style="position:absolute;left:320px;top:247px" width="7" height="10" viewBox="0 0 7 10"><path d="M1.5 1 L5.5 5 L1.5 9" stroke="#333" fill="none" stroke-width="1.1"/></svg>
<div style="left:36.40px;top:265.50px;font-size:13px;line-height:16px;color:#000;font-family:'Liberation Sans', sans-serif;font-weight:normal;white-space:pre;letter-spacing:-0.023px;">Save each marked group as ...</div>
<svg style="position:absolute;left:320px;top:269px" width="7" height="10" viewBox="0 0 7 10"><path d="M1.5 1 L5.5 5 L1.5 9" stroke="#333" fill="none" stroke-width="1.1"/></svg>
<div style="left:36.40px;top:287.50px;font-size:13px;line-height:16px;color:#000;font-family:'Liberation Sans', sans-serif;font-weight:normal;white-space:pre;letter-spacing:-0.152px;">Export ...</div>
<svg style="position:absolute;left:320px;top:291px" width="7" height="10" viewBox="0 0 7 10"><path d="M1.5 1 L5.5 5 L1.5 9" stroke="#333" fill="none" stroke-width="1.1"/></svg>
<div style="left:7px;top:311px;width:326px;height:1px;background:#dadada;"></div>
<div style="left:36.40px;top:318.50px;font-size:13px;line-height:16px;color:#000;font-family:'Liberation Sans', sans-serif;font-weight:normal;white-space:pre;letter-spacing:0.029px;">Refresh project</div>
<div style="left:36.40px;top:340.50px;font-size:13px;line-height:16px;color:#000;font-family:'Liberation Sans', sans-serif;font-weight:normal;white-space:pre;letter-spacing:0.024px;">Clear project name</div>
<div style="left:7px;top:364px;width:326px;height:1px;background:#dadada;"></div>
<div style="left:36.40px;top:371.50px;font-size:13px;line-height:16px;color:#000;font-family:'Liberation Sans', sans-serif;font-weight:normal;white-space:pre;letter-spacing:-0.430px;">Close</div>
<div style="right:476.00px;top:371.50px;font-size:13px;line-height:16px;color:#000;font-family:'Liberation Sans', sans-serif;font-weight:normal;white-space:pre;text-align:right;">Ctrl+w</div>
<div style="left:36.40px;top:393.50px;font-size:13px;line-height:16px;color:#000;font-family:'Liberation Sans', sans-serif;font-weight:normal;white-space:pre;letter-spacing:-0.568px;">Exit</div>
<div style="right:476.00px;top:393.50px;font-size:13px;line-height:16px;color:#000;font-family:'Liberation Sans', sans-serif;font-weight:normal;white-space:pre;text-align:right;">Ctrl+q</div>
<div style="left:336px;top:238px;width:270px;height:460px;border:1px solid #e0e0e0;border-radius:5px;background:#f9f9f9;box-shadow:0 6px 14px rgba(0,0,0,0.15);"></div>
<div style="left:342px;top:241px;width:258px;height:22px;border-radius:4px;background:#efefef;"></div>
<div style="left:374.40px;top:243.50px;font-size:13px;line-height:16px;color:#000;font-family:'Liberation Sans', sans-serif;font-weight:normal;white-space:pre;letter-spacing:-0.628px;">μ(E)</div>
<div style="left:374.40px;top:265.50px;font-size:13px;line-height:16px;color:#000;font-family:'Liberation Sans', sans-serif;font-weight:normal;white-space:pre;letter-spacing:-0.187px;">deriv(μ(E))</div>
<div style="left:374.40px;top:287.50px;font-size:13px;line-height:16px;color:#000;font-family:'Liberation Sans', sans-serif;font-weight:normal;white-space:pre;letter-spacing:-0.259px;">second(μ(E))</div>
<div style="left:374.40px;top:309.50px;font-size:13px;line-height:16px;color:#000;font-family:'Liberation Sans', sans-serif;font-weight:normal;white-space:pre;letter-spacing:-0.007px;">Save μ(E) with plot multipliers</div>
<div style="left:345px;top:333px;width:252px;height:1px;background:#dadada;"></div>
<div style="left:374.40px;top:340.50px;font-size:13px;line-height:16px;color:#000;font-family:'Liberation Sans', sans-serif;font-weight:normal;white-space:pre;letter-spacing:-0.293px;">norm(E)</div>
<div style="left:374.40px;top:362.50px;font-size:13px;line-height:16px;color:#000;font-family:'Liberation Sans', sans-serif;font-weight:normal;white-space:pre;letter-spacing:-0.107px;">deriv(norm(E))</div>
<div style="left:374.40px;top:384.50px;font-size:13px;line-height:16px;color:#000;font-family:'Liberation Sans', sans-serif;font-weight:normal;white-space:pre;letter-spacing:-0.176px;">second(norm(E))</div>
<div style="left:345px;top:408px;width:252px;height:1px;background:#dadada;"></div>
<div style="left:374.40px;top:415.50px;font-size:13px;line-height:16px;color:#000;font-family:'Liberation Sans', sans-serif;font-weight:normal;white-space:pre;letter-spacing:-0.171px;">χ(k)</div>
<div style="left:374.40px;top:437.50px;font-size:13px;line-height:16px;color:#000;font-family:'Liberation Sans', sans-serif;font-weight:normal;white-space:pre;letter-spacing:-0.037px;">kχ(k)</div>
<div style="left:374.40px;top:459.50px;font-size:13px;line-height:16px;color:#000;font-family:'Liberation Sans', sans-serif;font-weight:normal;white-space:pre;letter-spacing:0.081px;">k²χ(k)</div>
<div style="left:374.40px;top:481.50px;font-size:13px;line-height:16px;color:#000;font-family:'Liberation Sans', sans-serif;font-weight:normal;white-space:pre;letter-spacing:0.081px;">k³χ(k)</div>
<div style="left:345px;top:505px;width:252px;height:1px;background:#dadada;"></div>
<div style="left:374.40px;top:512.50px;font-size:13px;line-height:16px;color:#000;font-family:'Liberation Sans', sans-serif;font-weight:normal;white-space:pre;letter-spacing:-0.587px;">|χ(R)|</div>
<div style="left:374.40px;top:534.50px;font-size:13px;line-height:16px;color:#000;font-family:'Liberation Sans', sans-serif;font-weight:normal;white-space:pre;letter-spacing:-0.546px;">Re[χ(R)]</div>
<div style="left:374.40px;top:556.50px;font-size:13px;line-height:16px;color:#000;font-family:'Liberation Sans', sans-serif;font-weight:normal;white-space:pre;letter-spacing:-0.273px;">Im[χ(R)]</div>
<div style="left:374.40px;top:578.50px;font-size:13px;line-height:16px;color:#000;font-family:'Liberation Sans', sans-serif;font-weight:normal;white-space:pre;letter-spacing:-0.515px;">Pha[χ(R)]</div>
<div style="left:345px;top:602px;width:252px;height:1px;background:#dadada;"></div>
<div style="left:374.40px;top:609.50px;font-size:13px;line-height:16px;color:#000;font-family:'Liberation Sans', sans-serif;font-weight:normal;white-space:pre;letter-spacing:-0.228px;">|χ(q)|</div>
<div style="left:374.40px;top:631.50px;font-size:13px;line-height:16px;color:#000;font-family:'Liberation Sans', sans-serif;font-weight:normal;white-space:pre;letter-spacing:-0.277px;">Re[χ(q)]</div>
<div style="left:374.40px;top:653.50px;font-size:13px;line-height:16px;color:#000;font-family:'Liberation Sans', sans-serif;font-weight:normal;white-space:pre;letter-spacing:-0.003px;">Im[χ(q)]</div>
<div style="left:374.40px;top:675.50px;font-size:13px;line-height:16px;color:#000;font-family:'Liberation Sans', sans-serif;font-weight:normal;white-space:pre;letter-spacing:-0.275px;">Pha[χ(q)]</div>
</body></html>
